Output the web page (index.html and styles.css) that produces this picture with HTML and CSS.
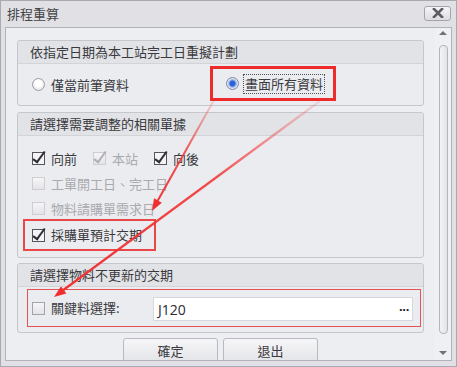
FILE: index.html
```html
<html>
  <head>
    <title>排程重算</title>
    <link rel="stylesheet" href="styles.css">
  </head>
  <body>
    <div class="window">
      <header class="titlebar">
        <span class="title">排程重算</span>
        <button class="close">
          <svg viewBox="0 0 12 10" width="12" height="10">
            <path d="M2 1 10 9M10 1 2 9" stroke="#5e5e64" stroke-width="2.6" stroke-linecap="square" />
          </svg>
        </button>
      </header>

      <div class="client">
        <div class="panel">
          <!-- group 1: radios -->
          <section class="group">
            <div class="group-head">依指定日期為本工站完工日重擬計劃</div>
            <div class="group-body radios">
              <label class="opt">
                <span class="radio"></span>
                <span>僅當前筆資料</span>
              </label>
              <span class="mark mark-radio">
                <label class="opt">
                  <span class="radio on"></span>
                  <span class="focus">畫面所有資料</span>
                </label>
              </span>
            </div>
          </section>

          <!-- group 2: documents -->
          <section class="group g2">
            <div class="group-head">請選擇需要調整的相關單據</div>
            <div class="group-body rows">
              <div class="row">
                <label class="opt inline"><span class="check on"></span><span>向前</span></label>
                <label class="opt inline off"><span class="check on"></span><span>本站</span></label>
                <label class="opt inline"><span class="check on"></span><span>向後</span></label>
              </div>
              <div class="row">
                <label class="opt off"><span class="check"></span><span>工單開工日、完工日</span></label>
              </div>
              <div class="row">
                <label class="opt off"><span class="check"></span><span>物料請購單需求日</span></label>
              </div>
              <div class="row mark mark-row">
                <label class="opt"><span class="check on"></span><span>採購單預計交期</span></label>
              </div>
            </div>
          </section>

          <!-- group 3: key material -->
          <section class="group g3">
            <div class="group-head">請選擇物料不更新的交期</div>
            <div class="group-body">
              <div class="mark mark-field">
                <label class="opt"><span class="check"></span><span>關鍵料選擇:</span></label>
                <div class="picker">
                  <span class="value">J120</span>
                  <span class="dots">&middot;&middot;&middot;</span>
                </div>
              </div>
            </div>
          </section>

          <div class="buttons">
            <button class="btn">確定</button>
            <button class="btn">退出</button>
          </div>
        </div>

        <div class="scrollbar">
          <span class="arrow up"></span>
          <span class="thumb"></span>
          <span class="arrow down"></span>
        </div>
      </div>

      <!-- annotation arrows over the dialog -->
      <svg class="arrows" width="457" height="367" viewBox="0 0 457 367">
        <defs>
          <linearGradient id="fade1" gradientUnits="userSpaceOnUse" x1="214" y1="100" x2="152" y2="211">
            <stop offset="0" stop-color="#f03a3a" stop-opacity="0.15" />
            <stop offset="0.45" stop-color="#f03a3a" stop-opacity="0.85" />
            <stop offset="1" stop-color="#f03030" stop-opacity="1" />
          </linearGradient>
          <linearGradient id="fade2" gradientUnits="userSpaceOnUse" x1="320" y1="101" x2="54" y2="297">
            <stop offset="0" stop-color="#f03a3a" stop-opacity="0.12" />
            <stop offset="0.4" stop-color="#f03a3a" stop-opacity="0.9" />
            <stop offset="1" stop-color="#f03030" stop-opacity="1" />
          </linearGradient>
        </defs>
        <line x1="214" y1="100" x2="157" y2="202" stroke="url(#fade1)" stroke-width="2" />
        <polygon points="152,211 161.8,202.7 154,198.3" fill="#f03030" />
        <line x1="320" y1="101" x2="62" y2="291" stroke="url(#fade2)" stroke-width="2.2" />
        <polygon points="54,297 66.4,293.5 61,286.3" fill="#f03030" />
      </svg>
    </div>
  </body>
</html>
```

FILE: styles.css
```css
body { margin: 0; padding: 0; background: #fff; font-family: "Noto Sans CJK TC", "Noto Sans", sans-serif; font-size: 13px; color: #3a3a3e; }
.window {
  position: relative;
  width: 457px;
  height: 367px;
  box-sizing: border-box;
  border: 1px solid #a9a9b1;
  padding: 0 4px 5px 4px;
  background: #e1e1e5;
  display: flex;
  flex-direction: column;
}
.titlebar {
  height: 26px;
  display: flex;
  align-items: center;
  justify-content: space-between;
  padding-left: 2px;
}
.title { font-size: 13px; color: #444448; line-height: 16px; }
.close {
  width: 27px;
  height: 15px;
  margin: -2px 1px 0 0;
  padding: 0;
  border: 1px solid #a5a5ad;
  border-radius: 3px;
  background: linear-gradient(#f6f6f8, #dcdce1);
  display: flex;
  align-items: center;
  justify-content: center;
}
.client {
  flex: 1;
  display: flex;
  border: 1px solid #b2b3ba;
  background: #eceef1;
  overflow: hidden;
}
.panel { flex: 1; padding: 12px 11px 0 11px; }

/* group boxes */
.group {
  border: 1px solid #c6c7cc;
  border-radius: 3px;
  background: #ebecf0;
}
.g2 { margin-top: 6px; }
.g3 { margin-top: 5px; }
.group-head {
  height: 22px;
  line-height: 22px;
  padding-left: 12px;
  background: #e2e3e7;
  border-bottom: 1px solid #d3d4d8;
  border-radius: 3px 3px 0 0;
}
.group-body { padding: 0 0 0 5px; }
.radios {
  height: 41px;
  display: flex;
  align-items: center;
  padding-left: 14px;
}
.rows { padding-top: 10px; padding-bottom: 6px; }
.row { height: 25px; display: flex; align-items: center; padding-left: 9px; }
.g3 .group-body { padding: 2px 2px 5px 9px; }

/* options */
.opt { display: flex; align-items: center; gap: 6px; line-height: 16px; white-space: nowrap; }
.opt.inline { width: 61px; }
.opt.off { color: #a9a9ae; }
.radio {
  width: 11px;
  height: 11px;
  border-radius: 50%;
  border: 1px solid #9c9ca5;
  background: radial-gradient(circle at 50% 40%, #ffffff 35%, #d6d7dc 100%);
  box-sizing: content-box;
}
.radio.on {
  border-color: #7c88a4;
  background: radial-gradient(circle, #2f62d4 0 2.5px, #8fb0ee 3.5px, #dfe4ee 5px);
}
.check {
  position: relative;
  width: 11px;
  height: 11px;
  border: 1px solid #a3a3aa;
  background: linear-gradient(#f6f6f8, #e4e4e8);
}
.opt:not(.off) .check.on { border-color: #55555c; background: #f4f4f6; }
.check.on::after {
  content: "";
  position: absolute;
  left: 3px;
  top: -4px;
  width: 4px;
  height: 12px;
  border: solid #2e2e32;
  border-width: 0 2.6px 2.6px 0;
  transform: rotate(36deg);
}
.off .check { border-color: #cdcdd2; }
.off .check.on::after { border-color: #b0b0b5; }

/* red annotation boxes */
.mark { box-sizing: border-box; }
.mark-radio {
  display: flex;
  align-items: center;
  margin-left: 81px;
  height: 35px;
  margin-top: -2px;
  width: 126px;
  padding-left: 13px;
  border: 3px solid #ee2b2b;
}
.mark-radio .opt { gap: 4px; }
.focus { border: 1px dotted #505058; padding: 1px 1px; }
.mark-row {
  width: 133px;
  height: 32px;
  margin-top: -2px;
  padding-left: 7px;
  border: 2px solid #ea4848;
}
.mark-field {
  height: 38px;
  display: flex;
  align-items: center;
  padding: 0 7px 0 4px;
  border: 1px solid #e25454;
}
.mark-field .opt { width: 121px; }
.picker {
  flex: 1;
  height: 24px;
  box-sizing: border-box;
  border: 1px solid #d7d8dc;
  background: #fff;
  display: flex;
  align-items: center;
  justify-content: space-between;
  padding: 0 3px 0 4px;
  margin-top: 2px;
}
.value { font-family: "Open Sans", "Noto Sans", sans-serif; font-size: 14px; color: #2a2a2e; }
.dots { font-family: "Liberation Sans", sans-serif; font-weight: bold; font-size: 13px; letter-spacing: -1px; color: #222; }

/* buttons */
.buttons { display: flex; justify-content: center; gap: 5px; margin-top: 5px; }
.btn {
  width: 95px;
  height: 25px;
  padding: 0;
  font-family: "Noto Sans CJK TC", sans-serif;
  font-size: 13px;
  color: #3a3a3e;
  border: 1px solid #b9bac1;
  border-radius: 3px;
  background: linear-gradient(#f6f6f8, #e3e4e8);
}

/* scrollbar */
.scrollbar {
  width: 16px;
  background: #eff0f3;
  display: flex;
  flex-direction: column;
  align-items: center;
}
.arrow { width: 0; height: 0; border-left: 4px solid transparent; border-right: 4px solid transparent; }
.arrow.up { margin-top: 3px; border-bottom: 4px solid #707078; }
.arrow.down { margin-top: auto; margin-bottom: 5px; border-top: 4px solid #707078; }
.thumb {
  margin-top: 10px;
  width: 7px;
  height: 287px;
  border: 1px solid #b4b5bc;
  border-radius: 4px;
  background: linear-gradient(90deg, #f4f4f6, #e2e3e7);
}

.arrows { position: absolute; left: -1px; top: -1px; pointer-events: none; }
```
